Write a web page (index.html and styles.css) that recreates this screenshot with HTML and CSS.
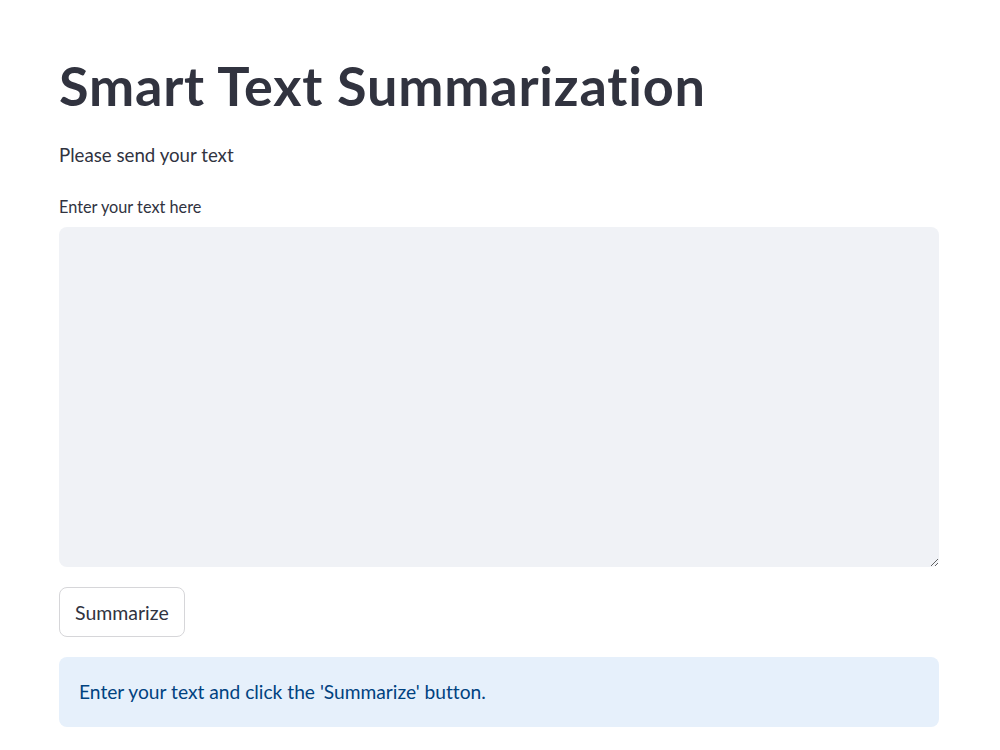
FILE: index.html
```html
<!DOCTYPE html>
<html>
<head>
    <link rel="stylesheet" href="styles.css">
</head>
<body>
    <div class="main">
        <h1 class="title">Smart Text Summarization</h1>
        <p class="intro">Please send your text</p>
        <label class="field-label" for="text">Enter your text here</label>
        <textarea id="text" class="text-input"></textarea>
        <button class="btn">Summarize</button>
        <div class="info">Enter your text and click the 'Summarize' button.</div>
    </div>
</body>
</html>
```

FILE: styles.css
```css
body {
    margin: 0;
    background-color: #ffffff;
    color: #31333f;
    font-family: Lato, "Liberation Sans", sans-serif;
    font-variant-ligatures: none;
}
.main {
    width: 880px;
    margin-left: 59px;
    padding-top: 55px;
    display: flex;
    flex-direction: column;
    align-items: flex-start;
}
.title {
    margin: 0;
    font-size: 54px;
    line-height: 62px;
    letter-spacing: 0.8px;
    font-weight: 700;
    color: #31333f;
}
.intro {
    margin: 25px 0 0;
    font-size: 18.7px;
    line-height: 27px;
}
.field-label {
    margin-top: 28px;
    font-size: 16.3px;
    line-height: 20px;
}
.text-input {
    box-sizing: border-box;
    margin-top: 10px;
    width: 880px;
    height: 340px;
    border: none;
    border-radius: 8px;
    background-color: #f0f2f6;
    resize: vertical;
    padding: 16px;
    font-family: inherit;
    font-size: 17px;
}
.btn {
    box-sizing: border-box;
    margin-top: 20px;
    height: 50px;
    padding: 0 15px;
    background-color: #ffffff;
    border: 1px solid #d6d6d9;
    border-radius: 8px;
    color: #31333f;
    font-family: inherit;
    font-size: 19.5px;
    cursor: pointer;
}
.info {
    box-sizing: border-box;
    margin-top: 20px;
    width: 880px;
    padding: 21px 20px;
    line-height: 28px;
    font-size: 19.2px;
    background-color: #e6f0fb;
    color: #004280;
    border-radius: 8px;
}
```
